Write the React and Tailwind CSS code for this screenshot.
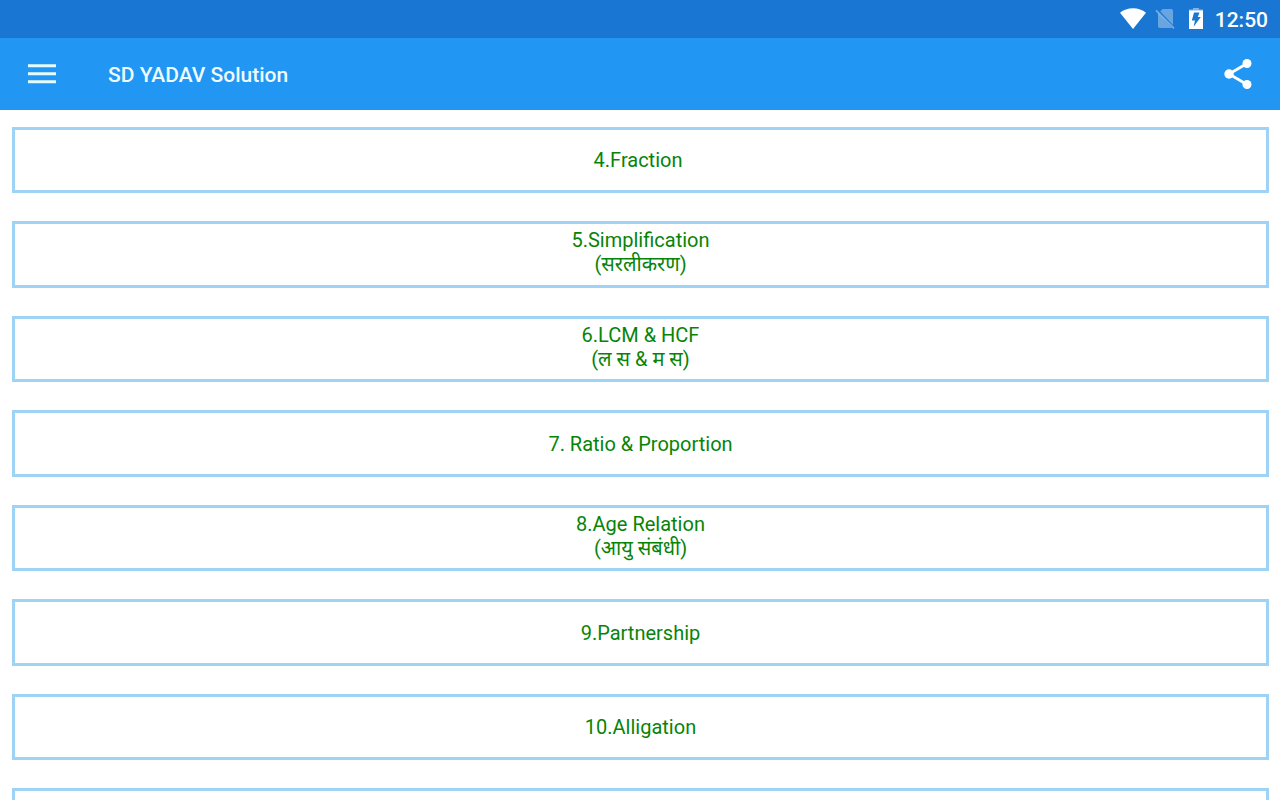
const chapters = [
  { title: '4.Fraction\u00a0' },
  { title: '5.Simplification', hindi: '(सरलीकरण)' },
  { title: '6.LCM & HCF', hindi: '(ल स & म स)' },
  { title: '7. Ratio & Proportion' },
  { title: '8.Age Relation', hindi: '(आयु संबंधी)' },
  { title: '9.Partnership' },
  { title: '10.Alligation' },
  { title: '' },
];

function WifiIcon() {
  return (
    <svg className="h-[22px] w-7" viewBox="0 0 28 22" fill="#fff" aria-hidden="true">
      <path d="M14 21 1 4.800C4.500 1.800 9 .3 14 .3s9.500 1.500 13 4.500z" />
    </svg>
  );
}

function NoSimIcon() {
  return (
    <svg className="h-5 w-5" viewBox="0 0 20 20" aria-hidden="true">
      <g fill="#fff" fillOpacity="0.35">
        <path d="M7.500 0H16q2 0 2 2v14L5.300 2.500z" />
        <path d="M3 4v13q0 2 2 2h12z" />
      </g>
      <path d="m1 1.300 18 18" stroke="#fff" strokeOpacity="0.4" strokeWidth="1.800" />
    </svg>
  );
}

function BatteryIcon() {
  return (
    <svg className="h-[22px] w-[14px]" viewBox="0 0 14 22" aria-hidden="true">
      <path d="M4 0h6v1.500h4V3H0V1.500h4z" fill="#fff" fillOpacity="0.45" />
      <path
        fillRule="evenodd"
        fill="#fff"
        d="M0 2.500h14v18.500H0zM5 4.500h5.500L8.800 9h3L4.600 18.800l1.400-6.300H2.800z"
      />
    </svg>
  );
}

function MenuIcon() {
  return (
    <svg className="h-5 w-7" viewBox="0 0 28 20" fill="#e6fbff" aria-hidden="true">
      <path d="M0 .2h28v3H0zM0 8.200h28v3H0zM0 16.200h28v3H0z" />
    </svg>
  );
}

function ShareIcon() {
  return (
    <svg className="h-8 w-7" viewBox="0 0 28 32" fill="#fff" aria-hidden="true">
      <path d="M23 5.500 5 16l18 10.500" fill="none" stroke="#fff" strokeWidth="2.800" />
      <circle cx="23" cy="5.500" r="4.500" />
      <circle cx="5" cy="16" r="4.700" />
      <circle cx="23" cy="26.500" r="4.500" />
    </svg>
  );
}

function ChapterButton({ title, hindi }) {
  return (
    <button
      type="button"
      className="flex h-[66px] w-full flex-col items-center justify-center border-3 border-[#9fd3f6] text-xl leading-6 text-[#078407] even:h-[67px]"
    >
      <span>{title}</span>
      {hindi && <span className="pb-[5px]">{hindi}</span>}
    </button>
  );
}

export default function App() {
  return (
    <div className="flex h-screen flex-col overflow-hidden bg-white font-[Roboto,'Noto_Sans',sans-serif]">
      <div className="flex h-[38px] shrink-0 items-center justify-end bg-[#1976d2] pr-3 text-white">
        <WifiIcon />
        <div className="ml-2">
          <NoSimIcon />
        </div>
        <div className="ml-3.5">
          <BatteryIcon />
        </div>
        <time className="ml-3 pt-0.5 text-[21px] leading-6 font-medium">12:50</time>
      </div>
      <header className="flex h-[72px] shrink-0 items-center bg-[#2196f3] px-7">
        <button type="button" aria-label="Menu">
          <MenuIcon />
        </button>
        <h1 className="ml-[52px] pt-0.5 text-[21px] leading-6 font-medium text-[#eefcff]">
          SD YADAV Solution
        </h1>
        <button type="button" aria-label="Share" className="ml-auto">
          <ShareIcon />
        </button>
      </header>
      <main className="flex-1 overflow-hidden pt-[17px] pr-[11px] pl-3">
        <div className="flex flex-col gap-7">
          {chapters.map((chapter, i) => (
            <ChapterButton key={i} title={chapter.title} hindi={chapter.hindi} />
          ))}
        </div>
      </main>
    </div>
  );
}
